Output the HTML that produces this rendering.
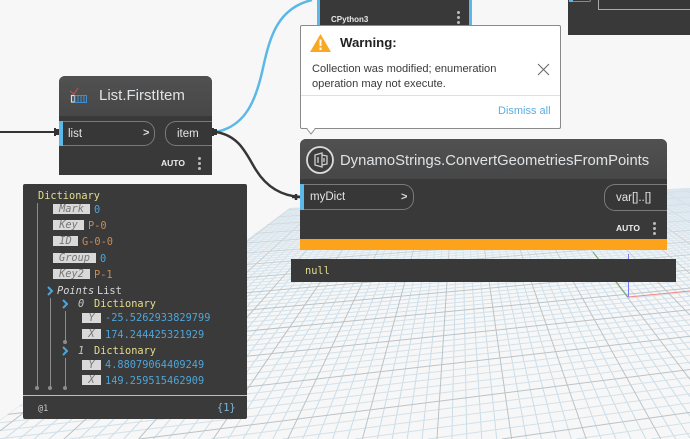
<!DOCTYPE html>
<html><head><meta charset="utf-8">
<style>
html,body{margin:0;padding:0;background:#f7f7f7;width:690px;height:439px;overflow:hidden}
#r{position:relative;width:690px;height:439px;overflow:hidden;background:#f7f7f7;font-family:"Liberation Sans",sans-serif}
#r div{position:absolute;box-sizing:border-box;white-space:nowrap}
svg{position:absolute;left:0;top:0}
.hd{background:linear-gradient(#515151,#474747)}
.bd{background:#393939}
.pill{border:1px solid #7a7a7a;background:#373737;color:#e4e4e4;font-size:11.5px;line-height:24px}
.auto{font-size:8.5px;font-weight:bold;color:#eee;line-height:10px}
.m{font-family:"DejaVu Sans Mono",monospace;font-size:10.3px;line-height:12px}
.y{color:#e4de8c}.b{color:#4ea5d8}.o{color:#c98c52}
.t{background:#d9d9d9;color:#777;font-family:"DejaVu Sans Mono",monospace;font-style:italic;font-size:10.3px;line-height:10px;height:10px;text-align:center;overflow:hidden}
.v{background:#8c8c8c;width:1px}
.dot{width:4px;height:4px;border-radius:50%;background:#8c8c8c}
</style></head><body>
<div id="r">
<svg id="g" width="690" height="439"></svg>
<svg width="690" height="439">
<path d="M628 297L690 291" stroke="#f08a8a" stroke-width="1" fill="none"/>
<path d="M628 297L593 252" stroke="#6aa86a" stroke-width="1" fill="none"/>
<path d="M628.500 297V254" stroke="#7a7af0" stroke-width="1" fill="none"/>
<path d="M0 132H56" stroke="#333" stroke-width="2" fill="none"/>
<path d="M216 132C246 126 256 100 263 68C270 36 278 8 312 0" stroke="#5cb8e6" stroke-width="2.500" fill="none"/>
<path d="M216 132C240 136 246 154 256 170C266 186 280 196 301 197" stroke="#363636" stroke-width="2.500" fill="none"/>
</svg>

<!-- top nodes -->
<div style="left:317px;top:0;width:155px;height:35px;background:#393939;border:3px solid #5cb8e6;border-top:0"></div>
<div style="left:331px;top:15px;font-size:8px;font-weight:bold;color:#e8e8e8;line-height:10px">CPython3</div>
<div style="left:457px;top:11px;width:3px;height:3px;border-radius:50%;background:#bbb;box-shadow:0 5px #bbb,0 10px #bbb"></div>
<div style="left:568px;top:0;width:122px;height:35px;background:#393939"></div>
<div style="left:569px;top:0;width:22px;height:2px;background:#373737;border-bottom:1px solid #888;border-right:1px solid #888;border-radius:0 0 4px 0"></div>
<div style="left:569px;top:0;width:4px;height:2px;background:#5cb8e6"></div>
<div style="left:598px;top:0;width:92px;height:10px;border:1px solid #aaa;border-top:0;border-right:0;background:#373737"></div>

<!-- warning -->
<div style="left:300px;top:25px;width:261px;height:104px;background:#fff;border:1px solid #8a8a8a;border-radius:2px"></div>
<svg width="690" height="439">
<path d="M307 129L311 134L315 129" fill="#fff" stroke="#8a8a8a"/>
<path d="M307.500 128.500H314.500" stroke="#fff" stroke-width="1.500"/>
<path d="M320.500 34L331 52H310Z" fill="#f9a825"/>
<path d="M320.500 39.500V46M320.500 47.500V50" stroke="#fff" stroke-width="2"/>
<path d="M538 64L549 75M549 64L538 75" stroke="#666" stroke-width="1" fill="none"/>
</svg>
<div style="left:340px;top:34px;font-size:13.200px;font-weight:bold;color:#222;line-height:17px">Warning:</div>
<div style="left:312px;top:62px;font-size:11.100px;color:#3a3a3a;line-height:15px">Collection was modified; enumeration<br>operation may not execute.</div>
<div style="left:301px;top:95px;width:259px;height:1px;background:#e0e0e0"></div>
<div style="left:498px;top:104px;font-size:11px;color:#5cace0;line-height:14px">Dismiss all</div>

<!-- List.FirstItem -->
<div class="bd" style="left:59px;top:76px;width:153px;height:99px;border-radius:6px 6px 0 0;overflow:hidden">
<div class="hd" style="left:0;top:0;width:153px;height:40px"></div>
</div>
<svg width="690" height="439">
<path d="M70 91L74 94L78 88" stroke="#b05050" stroke-width="1.200" fill="none"/>
<rect x="71.500" y="95.500" width="3" height="6.500" fill="none" stroke="#ddd" stroke-width="1.200"/>
<path d="M75 95.500H86.500V102.500H75ZM78 95.500V102.500M81 95.500V102.500M84 95.500V102.500" fill="none" stroke="#3f8fd0" stroke-width="1"/>
<path d="M55 128V136M56 130H59V134H56" stroke="#333" stroke-width="2" fill="#333"/>
<path d="M213 128V136M213 130H216V134H213" stroke="#333" stroke-width="2" fill="#333"/>
</svg>
<div style="left:99px;top:87px;font-size:15px;color:#dfe3e6;line-height:18px">List.FirstItem</div>
<div class="pill" style="left:62px;top:121px;width:93px;height:25px;border-radius:0 11px 11px 0;border-left:0;padding-left:6px">list</div>
<div style="left:143px;top:121px;font-size:11px;font-weight:bold;color:#ddd;line-height:24px">&gt;</div>
<div style="left:59px;top:121px;width:4px;height:25px;background:#5cb8e6"></div>
<div class="pill" style="left:165px;top:121px;width:47px;height:25px;border-radius:11px 0 0 11px;border-right:0;padding-left:11px">item</div>
<div class="auto" style="left:161px;top:158px">AUTO</div>
<div style="left:198px;top:157px;width:3px;height:3px;border-radius:50%;background:#bbb;box-shadow:0 5px #bbb,0 10px #bbb"></div>

<!-- Dictionary panel -->
<div style="left:23px;top:184px;width:224px;height:235px;background:#3a3a3a;border-radius:2px"></div>
<div style="left:23px;top:395px;width:224px;height:1px;background:#bdbdbd"></div>
<div class="m y" style="left:38px;top:190px">Dictionary</div>
<div class="v" style="left:37px;top:203px;height:185px"></div><div class="dot" style="left:35px;top:386px"></div>
<div class="v" style="left:50px;top:298px;height:90px"></div><div class="dot" style="left:48px;top:386px"></div>
<div class="v" style="left:65px;top:311px;height:31px"></div><div class="dot" style="left:63px;top:340px"></div>
<div class="v" style="left:65px;top:358px;height:30px"></div><div class="dot" style="left:63px;top:386px"></div>

<div class="t" style="left:53px;top:204px;width:37px">Mark</div><div class="m b" style="left:94px;top:204px">0</div>
<div class="t" style="left:53px;top:220px;width:31px">Key</div><div class="m o" style="left:88px;top:220px">P-0</div>
<div class="t" style="left:53px;top:236px;width:25px">ID</div><div class="m o" style="left:82px;top:236px">G-0-0</div>
<div class="t" style="left:53px;top:253px;width:43px">Group</div><div class="m b" style="left:100px;top:253px">0</div>
<div class="t" style="left:53px;top:269px;width:37px">Key2</div><div class="m o" style="left:94px;top:269px">P-1</div>

<svg width="690" height="439">
<path d="M48 287L52 291L48 295M63 300L67 304L63 308M63 347L67 351L63 355" stroke="#4ea5d8" stroke-width="2" fill="none"/>
</svg>
<div class="m" style="left:57px;top:285px;color:#d8d8d8;font-style:italic">Points</div>
<div class="m" style="left:97px;top:285px;color:#d8d8d8">List</div>
<div class="m" style="left:78px;top:298px;color:#c8c8c8;font-style:italic">0</div>
<div class="m y" style="left:94px;top:298px">Dictionary</div>
<div class="t" style="left:82px;top:313px;width:19px">Y</div><div class="m b" style="left:105px;top:312px">-25.5262933829799</div>
<div class="t" style="left:82px;top:329px;width:19px">X</div><div class="m b" style="left:105px;top:329px">174.244425321929</div>
<div class="m" style="left:78px;top:345px;color:#c8c8c8;font-style:italic">1</div>
<div class="m y" style="left:94px;top:345px">Dictionary</div>
<div class="t" style="left:82px;top:360px;width:19px">Y</div><div class="m b" style="left:105px;top:359px">4.88079064409249</div>
<div class="t" style="left:82px;top:375px;width:19px">X</div><div class="m b" style="left:105px;top:375px">149.259515462909</div>
<div class="m" style="left:38px;top:403px;color:#c8c8c8;font-size:8.500px">@1</div>
<div class="m" style="left:217px;top:402px;color:#7fb6d8">{1}</div>

<!-- Main node -->
<div class="bd" style="left:300px;top:139px;width:367px;height:111px;border-radius:6px 6px 0 0;overflow:hidden">
<div class="hd" style="left:0;top:0;width:367px;height:40px"></div>
<div style="left:0;top:100px;width:367px;height:11px;background:#fca31b"></div>
</div>
<svg width="690" height="439">
<circle cx="320" cy="160" r="13" fill="#3d3d3d" stroke="#dcdcdc" stroke-width="1.800"/>
<path d="M315 155L322 153V167L315 165ZM322 155L327 156V164L322 165M318 157V163M324 158V162" fill="none" stroke="#cfcfcf" stroke-width="1.300"/>
<path d="M292 197H296M296 194V200M296 197H300" stroke="#333" stroke-width="2.500" fill="none"/>
</svg>
<div style="left:340px;top:151px;font-size:14.800px;color:#dfe3e6;line-height:20px">DynamoStrings.ConvertGeometriesFromPoints</div>
<div class="pill" style="left:303px;top:184px;width:111px;height:26px;border-radius:0 11px 11px 0;border-left:0;padding-left:7px;line-height:25px">myDict</div>
<div style="left:401px;top:184px;font-size:11px;font-weight:bold;color:#ddd;line-height:26px">&gt;</div>
<div style="left:300px;top:184px;width:4px;height:26px;background:#5cb8e6"></div>
<div class="pill" style="left:604px;top:184px;width:63px;height:27px;border-radius:11px 0 0 11px;border-right:0;padding-left:11px;line-height:26px">var[]..[]</div>
<div class="auto" style="left:616px;top:223px">AUTO</div>
<div style="left:653px;top:222px;width:3px;height:3px;border-radius:50%;background:#bbb;box-shadow:0 5px #bbb,0 10px #bbb"></div>

<!-- null -->
<div style="left:291px;top:259px;width:385px;height:23px;background:#393939"></div>
<div class="m y" style="left:305px;top:265px">null</div>
</div>
<script>
(function(){
var V1=[460,78],V2=[3500,15],s='';
var X0=0,X1=690,Y0=170,Y1=439;
function ln(a,b,c,w){
 var t0=0,t1=1,dx=b[0]-a[0],dy=b[1]-a[1];
 var P=[-dx,dx,-dy,dy],Q=[a[0]-X0,X1-a[0],a[1]-Y0,Y1-a[1]];
 for(var j=0;j<4;j++){
  if(P[j]===0){if(Q[j]<0)return;continue;}
  var r=Q[j]/P[j];
  if(P[j]<0){if(r>t0)t0=r;}else{if(r<t1)t1=r;}
 }
 if(t0>=t1)return;
 s+='<line x1="'+(a[0]+dx*t0).toFixed(1)+'" y1="'+(a[1]+dy*t0).toFixed(1)+'" x2="'+(a[0]+dx*t1).toFixed(1)+'" y2="'+(a[1]+dy*t1).toFixed(1)+'" stroke="'+c+'" stroke-width="'+w+'"/>';
}
function hor(n,c,w){
 var d=1/(0.002915+n*0.000368),y=82+d;
 var dx=250-V2[0],dy=y-V2[1],k=(0-V2[0])/dx;
 ln(V2,[0,V2[1]+dy*k],c,w);
}
var i,minV='#c9dde9',minH='#d3e1ea',maj='#bac3c8';
for(i=-60;i<=70;i++){if(i%5===0)continue;ln(V1,[437+i*14.92,439],minV,1);}
for(i=-25;i<=70;i++){if(i%5===0)continue;hor(i/5,minH,1);}
for(i=-60;i<=70;i+=5){ln(V1,[437+i*14.92,439],maj,1);}
for(i=-25;i<=70;i+=5){hor(i/5,maj,1);}
document.getElementById('g').innerHTML='<defs><linearGradient id="f" x1="0" y1="188" x2="0" y2="300" gradientUnits="userSpaceOnUse"><stop offset="0" stop-color="#dce8f0" stop-opacity=".8"/><stop offset="1" stop-color="#eef3f6" stop-opacity="0"/></linearGradient></defs><clipPath id="c"><polygon points="0,420 290,208 690,188 690,439 0,439"/></clipPath><g clip-path="url(#c)">'+s+'<rect x="0" y="180" width="690" height="130" fill="url(#f)"/></g>';
})();
</script>
</body></html>
